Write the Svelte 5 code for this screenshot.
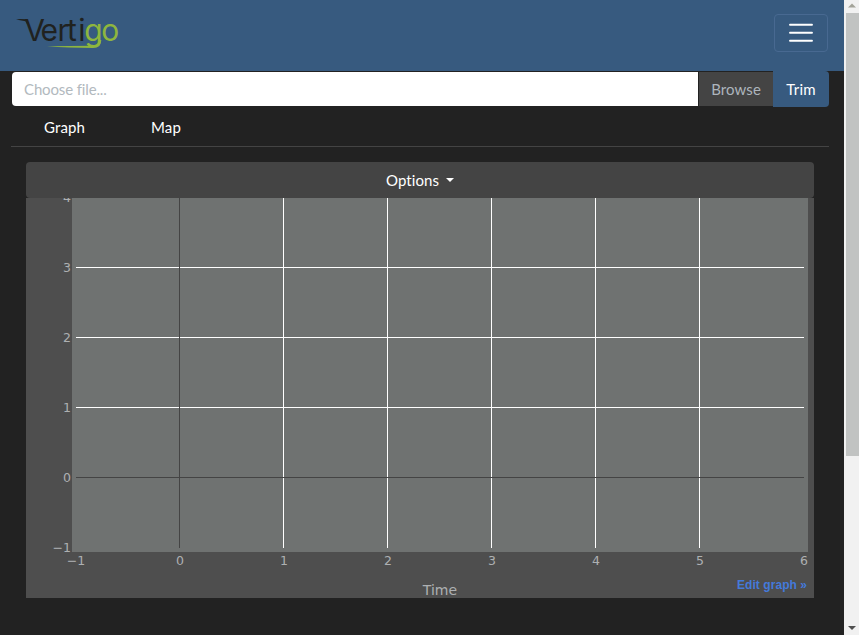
<script>
  const xTicks = [-1, 0, 1, 2, 3, 4, 5, 6].map((v) => ({ v, x: 154 + v * 104 }));
  const yTicks = [-1, 0, 1, 2, 3, 4].map((v) => ({ v, y: 279 - v * 70 }));
  const label = (v) => String(v).replace('-', '−');
</script>

<div class="screen">
  <main>
    <header>
      <svg class="logo" width="110" height="40" viewBox="0 0 110 40" aria-label="Vertigo">
        <path d="M0 8.5 L4 8 L11 8.2 L13 13 L11 13 L9.5 10.2 Z" fill="#20221f" />
        <text y="30" x="8.3 24.5 41.5 51 62.3" fill="#20221f">Verti</text>
        <text y="30" x="68.2 85.2" fill="#8eb63e">go</text>
        <path d="M31 35.3 L76 34.7 Q83 35 83 29 L85.3 29 Q85.3 36.9 77 37 Q52 37 31 35.3Z" fill="#8eb63e" />
      </svg>
      <button class="toggler" aria-label="Menu">
        <svg width="30" height="30" viewBox="0 0 30 30"><path d="M4 7h22M4 15h22M4 23h22" transform="translate(0 -.2)" stroke="#fff" stroke-width="1.9" stroke-linecap="round" /></svg>
      </button>
    </header>
    <div class="body">
      <div class="upload">
        <div class="file">Choose file...</div>
        <div class="browse">Browse</div>
        <button class="trim">Trim</button>
      </div>
      <nav><a class="graph" href="#graph">Graph</a><a class="map" href="#map">Map</a></nav>
      <section>
        <button class="options">Options<i></i></button>
        <svg class="plot" width="788" height="400" viewBox="0 0 788 400">
          <rect width="788" height="400" fill="#4e4e4e" />
          <rect x="46" width="736" height="354" fill="#6f7271" />
          <g shape-rendering="crispEdges">
            {#each xTicks.slice(2, 7) as t}<rect x={t.x - 1} y="0" width="1" height="350" fill="#fff" />{/each}
            {#each yTicks.slice(2, 5) as t}<rect x="50" y={t.y} width="728" height="1" fill="#fff" />{/each}
            <rect x="153" width="1" height="350" fill="#444" />
            <rect x="50" y="279" width="728" height="1" fill="#444" />
          </g>
          {#each xTicks as t}<text x={t.x} y="367" text-anchor="middle">{label(t.v)}</text>{/each}
          {#each yTicks as t}<text x="45" y={t.y + 5} text-anchor="end">{label(t.v)}</text>{/each}
          <text class="title" x="414" y="397" text-anchor="middle">Time</text>
          <text class="edit" x="711" y="391" textLength="70">Edit graph »</text>
        </svg>
      </section>
    </div>
  </main>
  <aside>
    <svg width="15" height="13"><path d="M4 7.5 8 3.5l4 4z" fill="#a3a399" /></svg>
    <div class="thumb"></div>
    <svg class="down" width="15" height="13"><path d="M4 4h8L8 8z" fill="#505050" /></svg>
  </aside>
</div>

<style>
  :global(body) { overflow: hidden; background: #222; }
  .screen { display: flex; height: 635px; font: 15px/22.5px Lato, sans-serif; color: #fff; font-variant-ligatures: none; }
  main { width: 844px; background: #222; }
  button { font: inherit; font-variant-ligatures: none; color: inherit; border: 0; padding: 0; }
  header { height: 71px; box-sizing: border-box; background: #375a7f; display: flex; align-items: flex-start; justify-content: space-between; padding: 11px 16px 0; }
  .logo { font: 400 30px Inter, sans-serif; }
  .toggler { box-sizing: border-box; width: 54px; height: 38px; margin-top: 3px; border: 1px solid #486991; border-radius: 4px; background: none; display: flex; align-items: center; justify-content: center; }
  .body { padding: 0 15px 0 11px; }
  .upload { display: flex; height: 36px; }
  .file { box-sizing: border-box; width: 687px; height: 34px; margin: 1px 0 0 1px; padding: 6px 12px; background: #fff; color: #b2b9be; border-radius: 4px 0 0 4px; letter-spacing: -.14px; }
  .browse { box-sizing: border-box; width: 74px; height: 34px; margin: 1px 0 0 1px; padding: 6px 0 0 12px; background: #444; color: #adb5bd; letter-spacing: .1px; }
  .trim { width: 56px; background: #375a7f; border-radius: 0 4px 4px 0; letter-spacing: .3px; }
  nav { display: flex; height: 39px; border-bottom: 1px solid #444; }
  a { color: inherit; text-decoration: none; padding: 9px 33px 0; letter-spacing: .12px; }
  section { display: flex; flex-direction: column; margin: 15px 15px 0; }
  .options { height: 36px; background: #444; border-radius: 4px; display: flex; align-items: center; justify-content: center; letter-spacing: .08px; }
  .options i { margin-left: 7px; border: 4.5px solid transparent; border-top-color: #fff; border-bottom: 0; }
  .plot { display: block; font: 12.5px "DejaVu Sans", Verdana, sans-serif; fill: #adb0b2; }
  .title { font-size: 14px; }
  .edit { font: bold 12px "Liberation Sans", Arial, sans-serif; fill: #447adb; }
  aside { width: 15px; background: #f1f1f1; display: flex; flex-direction: column; }
  aside svg { display: block; }
  .thumb { height: 443px; margin-left: 2px; background: #c1c3c2; }
  .down { margin-top: auto; }
</style>
